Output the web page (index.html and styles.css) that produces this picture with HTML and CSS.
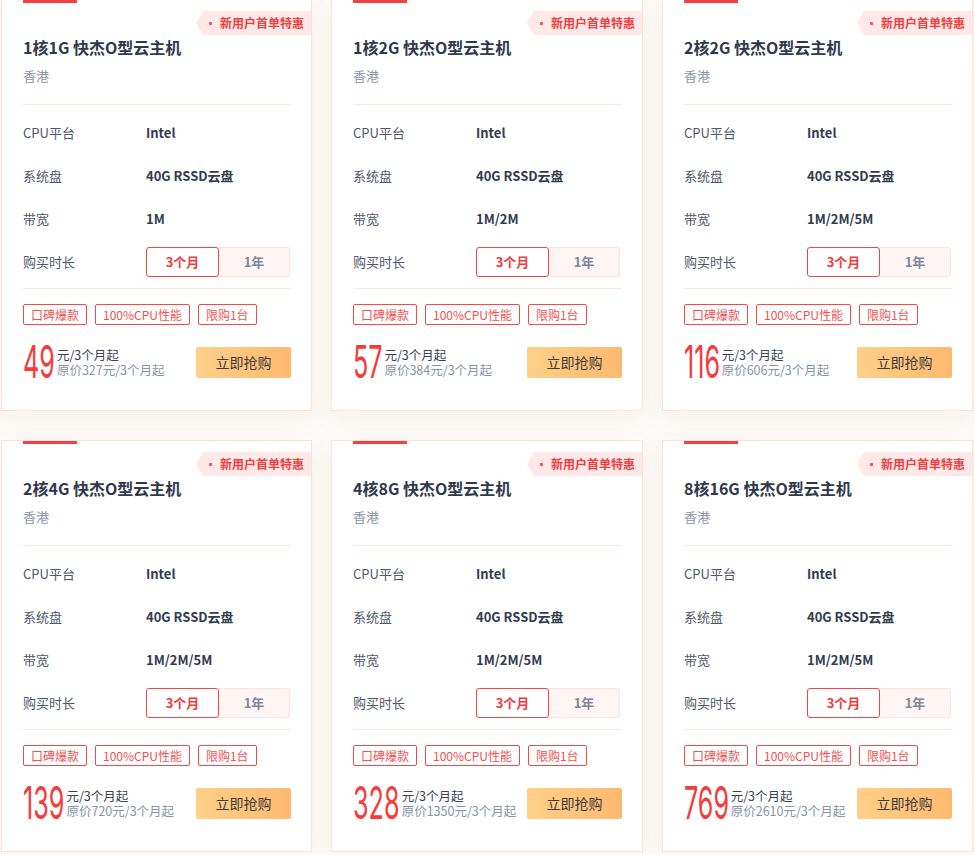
FILE: index.html
```html
<!DOCTYPE html>
<html lang="zh-CN">
<head>
    <meta charset="UTF-8">
    <meta name="viewport" content="width=device-width, initial-scale=1.0">
    <title>快杰O型云主机</title>
    <link rel="stylesheet" href="styles.css">
</head>
<body>
    <div class="product-list" id="productList">
        <!-- Cards are filled in by the script below -->
    </div>

    <script>
        const products = [
            { cpu: 1, mem: 1, bandwidth: "1M", price: 49, origin: 327 },
            { cpu: 1, mem: 2, bandwidth: "1M/2M", price: 57, origin: 384 },
            { cpu: 2, mem: 2, bandwidth: "1M/2M/5M", price: 116, origin: 606 },
            { cpu: 2, mem: 4, bandwidth: "1M/2M/5M", price: 139, origin: 720 },
            { cpu: 4, mem: 8, bandwidth: "1M/2M/5M", price: 328, origin: 1350 },
            { cpu: 8, mem: 16, bandwidth: "1M/2M/5M", price: 769, origin: 2610 }
        ];

        const list = document.getElementById("productList");

        products.forEach(p => {
            const card = document.createElement("div");
            card.className = "card";
            card.innerHTML = `
                <span class="card-badge"><i class="badge-dot"></i>新用户首单特惠</span>
                <div class="card-head">
                    <h3 class="card-title">${p.cpu}核${p.mem}G 快杰O型云主机</h3>
                    <p class="card-region">香港</p>
                </div>
                <ul class="spec-list">
                    <li><span class="spec-label">CPU平台</span><span class="spec-value">Intel</span></li>
                    <li><span class="spec-label">系统盘</span><span class="spec-value">40G RSSD云盘</span></li>
                    <li><span class="spec-label">带宽</span><span class="spec-value">${p.bandwidth}</span></li>
                    <li>
                        <span class="spec-label">购买时长</span>
                        <div class="period">
                            <span class="period-item active">3个月</span>
                            <span class="period-item">1年</span>
                        </div>
                    </li>
                </ul>
                <div class="tags">
                    <span class="tag">口碑爆款</span>
                    <span class="tag">100%CPU性能</span>
                    <span class="tag">限购1台</span>
                </div>
                <div class="price-row">
                    <div class="price">
                        <span class="price-num">${p.price}</span>
                        <div class="price-text">
                            <div>元/3个月起</div>
                            <div class="price-origin">原价${p.origin}元/3个月起</div>
                        </div>
                    </div>
                    <button class="buy-btn">立即抢购</button>
                </div>`;
            list.appendChild(card);
        });

        // the number is squeezed with a transform, so give back the width it no longer uses
        document.querySelectorAll(".price-num").forEach(num => {
            const shown = num.getBoundingClientRect().width;
            num.style.marginRight = (shown - num.offsetWidth + 2) + "px";
        });
    </script>
</body>
</html>
```

FILE: styles.css
```css
body { margin: 0; background: #fcfaf7; font-family: "Noto Sans CJK SC", sans-serif; overflow: hidden; }
.product-list { display: grid; grid-template-columns: 311px 312px 311px; column-gap: 19px; row-gap: 29px; padding-left: 1px; margin-top: -1px; }

.card { position: relative; height: 412px; box-sizing: border-box; border: 1px solid #ffdfda; background: #fff; padding: 0 20px 0 21px; box-shadow: 0 8px 24px rgba(150, 110, 70, 0.06); }
.card::before { content: ""; position: absolute; left: 21px; top: 0; width: 54px; height: 3px; background: #f04242; }

.card-badge {
    position: absolute;
    top: 11px;
    right: 0;
    height: 24px;
    line-height: 24px;
    padding: 0 7px 0 13px;
    background: #ffe9e8;
    color: #f03c3c;
    font-size: 12px;
    font-weight: bold;
    clip-path: polygon(7px 0, 100% 0, 100% 100%, 7px 100%, 0 50%);
    display: flex;
    align-items: center;
}
.badge-dot { width: 3px; height: 3px; background: #f25c5c; margin-right: 8px; }

.card-head { padding-top: 35px; border-bottom: 1px solid #ffe4e0; }
.card-title { margin: 0; font-size: 16px; line-height: 24px; font-weight: bold; color: #2f384c; }
.card-region { margin: 7px 0 18px; font-size: 13px; line-height: 20px; color: #8c96a8; }

.spec-list { list-style: none; margin: 0; padding: 6px 0 5px; border-bottom: 1px solid #ffe4e0; }
.spec-list li { display: flex; align-items: center; height: 43px; }
.spec-label { width: 123px; font-size: 13px; color: #4f576b; }
.spec-value { font-size: 13px; font-weight: bold; color: #333b4f; }

.period { display: flex; }
.period-item { box-sizing: border-box; height: 30px; line-height: 28px; text-align: center; font-size: 13px; font-weight: bold; }
.period-item.active { width: 73px; border: 1px solid #f04545; border-radius: 3px; color: #f03c3c; background: #fff; }
.period-item:not(.active) { width: 71px; border: 1px solid #ffe1dd; border-left: none; border-radius: 0 3px 3px 0; background: #fff5f4; color: #7d879b; }

.tags { display: flex; gap: 8px; margin-top: 15px; }
.tag { box-sizing: border-box; height: 21px; line-height: 19px; padding: 0 7px; border: 1px solid #f04a4a; border-radius: 2px; font-size: 12px; color: #f05252; }

.price-row { display: flex; justify-content: space-between; align-items: center; margin-top: 14px; height: 46px; }
.price { display: flex; align-items: center; }
.price-num { display: inline-block; font-family: Inter, "Liberation Sans", sans-serif; font-variant-numeric: proportional-nums; font-size: 45px; line-height: 46px; color: #f53b3b; transform: scaleX(0.56); transform-origin: 0 50%; }
.price-text { font-size: 12.5px; line-height: 15px; color: #3a4256; }
.price-origin { color: #8793a9; }

.buy-btn { width: 95px; height: 31px; padding: 0; border: none; border-radius: 2px; background: linear-gradient(90deg, #ffd089, #ffb96f); font-family: inherit; font-size: 14px; color: #3b3b3b; cursor: pointer; }
```
